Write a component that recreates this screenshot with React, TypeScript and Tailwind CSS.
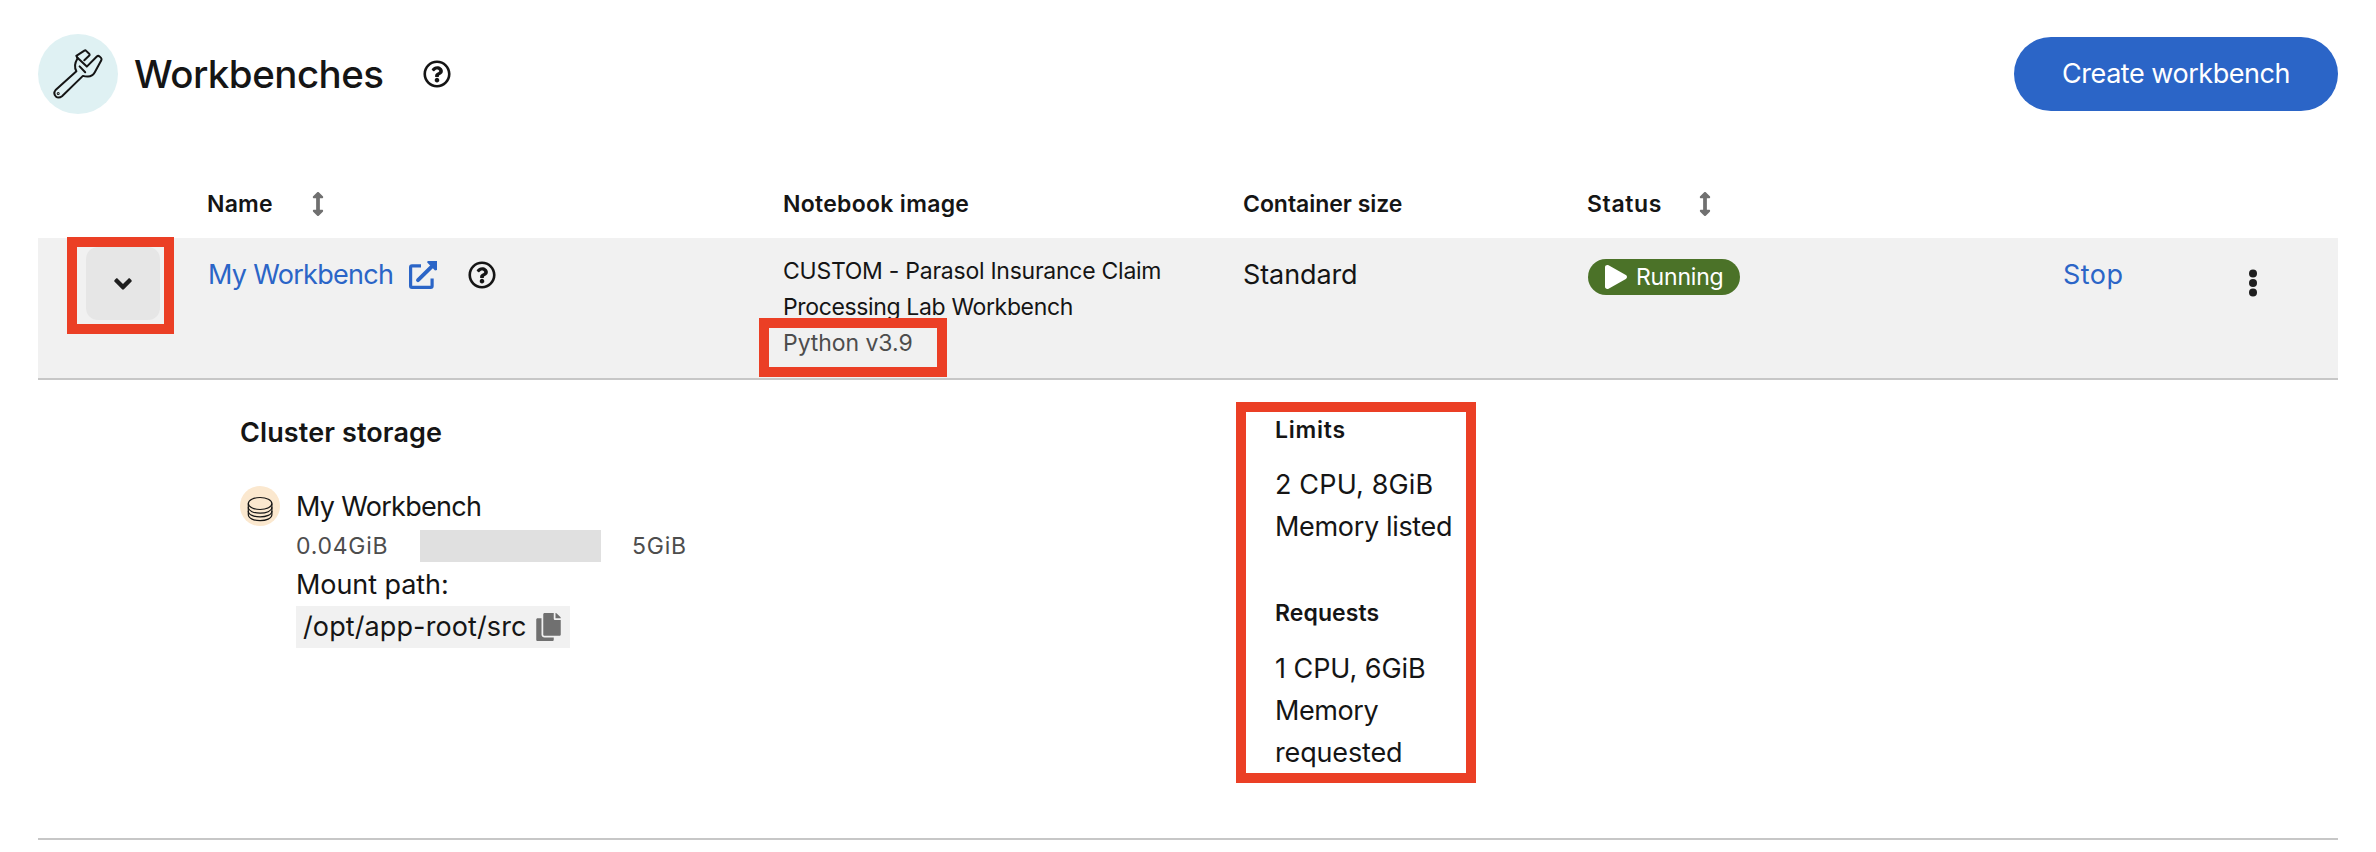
import React from "react";
import { FaAngleDown, FaArrowsAltV, FaCopy, FaPlay, FaRegQuestionCircle } from "react-icons/fa";

const COLUMNS = "grid grid-cols-[170px_575px_460px_345px_475px_1fr]";
const HEADING = "text-[23px] leading-9 font-semibold";
const BODY = "text-[27px] leading-[42px]";
const SMALL = "text-[23px] leading-9";

function WrenchIcon() {
  return (
    <svg viewBox="0 0 80 80" className="size-20" fill="none" stroke="#151515" strokeWidth="2" strokeLinejoin="round" strokeLinecap="round">
      <path d="M39.5 24 L38.3 21.8 L46.4 16.6 Q47.4 16 48.2 16.9 L51.4 20 Q52 20.8 51.3 21.5 L46.3 26.2" />
      <path d="M39.2 23.6 L48.8 32.6 L58.8 22.5 Q60.2 21.3 61.5 22.4 L63 23.9 Q64 25 63.3 26.3 L56.8 38.2 Q54.4 42.4 50 42.6 Q47.4 42.7 44.9 41.9 L24 62.2 Q20.6 64.8 17.8 62.4 Q15 59.4 17.6 56 L38.4 37.2 Q35.2 31.6 39.2 25" />
      <path d="M41.6 32.4 L47.2 38.2" />
      <circle cx="20.2" cy="59.4" r="0.5" />
    </svg>
  );
}

function DatabaseIcon() {
  return (
    <svg viewBox="0 0 40 40" className="size-10" fill="none" stroke="#151515" strokeWidth="1.2">
      <ellipse cx="20.1" cy="17.5" rx="11.8" ry="6" />
      <path d="M8.3 17.5 V28.6 C8.3 36.6 31.9 36.6 31.9 28.6 V17.5" />
      <path d="M8.3 21.2 C8.3 29.2 31.9 29.2 31.9 21.2" />
      <path d="M8.3 24.9 C8.3 32.9 31.9 32.9 31.9 24.9" />
    </svg>
  );
}

function ExternalLinkIcon() {
  return (
    <svg viewBox="0 0 28 28" className="size-7" fill="none" stroke="#2b65c7" strokeWidth="3.2">
      <path d="M12 4.8 H3 Q1.6 4.8 1.6 6.2 V25 Q1.6 26.4 3 26.4 H21.7 Q23.1 26.4 23.1 25 V17.6" />
      <path d="M9 19.2 L24 4.4" strokeWidth="3.9" strokeLinecap="round" />
      <path d="M18.6 0 H28 V9 L26 9.6 L18.2 1.6 Z" fill="#2b65c7" stroke="none" />
    </svg>
  );
}

function KebabIcon() {
  return (
    <svg viewBox="0 0 10 28" className="h-7 w-2.5" fill="#1f1f1f">
      <circle cx="5" cy="4.4" r="4" />
      <circle cx="5" cy="14" r="4" />
      <circle cx="5" cy="23.6" r="4" />
    </svg>
  );
}

function SortIcon() {
  return <FaArrowsAltV className="h-6 w-3 text-[#707070]" preserveAspectRatio="none" />;
}

export default function App() {
  return (
    <div className="h-[852px] w-[2376px] whitespace-nowrap bg-white px-[38px] pt-[34px] font-['Inter',sans-serif] text-[#151515]">
      <header className="flex h-20 items-center">
        <span className="rounded-full bg-[#dff1f3]">
          <WrenchIcon />
        </span>
        <h1 className="ml-4 w-[289px] text-[38.5px] leading-[52px] font-medium tracking-[-0.52px]">Workbenches</h1>
        <FaRegQuestionCircle className="size-7" />
        <button className="ml-auto h-[74px] w-[324px] rounded-full bg-[#2b65c7] text-[27px] leading-[42px] tracking-[-0.47px] text-white">
          Create workbench
        </button>
      </header>

      <div className={`${COLUMNS} ${HEADING} h-[124px] pt-[72px]`}>
        <span />
        <span className="-ml-px flex h-9 items-center justify-between pr-[459px] tracking-[0.21px]">
          Name <SortIcon />
        </span>
        <span className="tracking-[0.29px]">Notebook image</span>
        <span className="tracking-[-0.04px]">Container size</span>
        <span className="-ml-px flex h-9 items-center gap-[37px] tracking-[0.64px]">
          Status <SortIcon />
        </span>
      </div>

      <div className={`${COLUMNS} h-[142px] border-b-2 border-[#c7c7c7] bg-[#f1f1f1]`}>
        <div className="pt-[9px] pl-12">
          <button className="relative flex h-[73px] w-[74px] items-center justify-center rounded-xl bg-[#e6e6e6]">
            <FaAngleDown className="size-7 text-[#1f1f1f]" />
            <span className="absolute -top-[10px] -left-[19px] h-[97px] w-[107px] border-10 border-[#eb3f25]" />
          </button>
        </div>
        <div className="flex h-[58px] items-center pt-4">
          <a className={`${BODY} w-[201px] tracking-[-0.7px] text-[#2b65c7]`}>My Workbench</a>
          <ExternalLinkIcon />
          <FaRegQuestionCircle className="ml-[31px] size-7" />
        </div>
        <div className={`${SMALL} pt-[15px]`}>
          <p className="tracking-[-0.26px]">CUSTOM - Parasol Insurance Claim</p>
          <p className="tracking-[-0.36px]">Processing Lab Workbench</p>
          <p className="relative tracking-[-0.06px] text-[#4d4d4d]">
            Python v3.9
            <span className="absolute -top-[7px] -left-6 h-[59px] w-[188px] border-10 border-[#eb3f25]" />
          </p>
        </div>
        <span className={`${BODY} pt-4 tracking-[-0.1px]`}>Standard</span>
        <div className="pt-[21px]">
          <span className="flex h-9 w-[152px] items-center rounded-full bg-[#4b7228] pl-[17px] text-[23px] tracking-[-0.19px] text-white">
            <FaPlay className="mr-[9px] h-6 w-[22px]" preserveAspectRatio="none" />
            Running
          </span>
        </div>
        <div className="flex pt-4">
          <a className={`${BODY} w-[185px] tracking-[0.47px] text-[#2b65c7]`}>Stop</a>
          <span className="pt-[15px]">
            <KebabIcon />
          </span>
        </div>
      </div>

      <div className="flex h-[460px] border-b-2 border-[#c7c7c7]">
        <section className="w-[1198px] pt-8 pl-[202px]">
          <h2 className="text-[27px] leading-[42px] font-semibold tracking-[0.11px]">Cluster storage</h2>
          <div className="mt-8 flex">
            <span className="size-10 rounded-full bg-[#fbe8cf]">
              <DatabaseIcon />
            </span>
            <div className={`${BODY} ml-4`}>
              <p className="tracking-[-0.7px]">My Workbench</p>
              <div className="mt-0.5 flex h-8 items-center text-[23px] text-[#4d4d4d]">
                <span className="w-[124px] tracking-[0.75px]">0.04GiB</span>
                <span className="h-8 w-[181px] bg-[#e0e0e0]" />
                <span className="ml-[31px] tracking-[0.76px]">5GiB</span>
              </div>
              <p className="mt-0.5 tracking-[-0.08px]">Mount path:</p>
              <p className="flex h-[42px] w-[274px] items-center bg-[#f1f1f1] pl-[7px] tracking-[0.11px]">
                /opt/app-root/src
                <FaCopy className="ml-auto mr-[9px] h-7 w-[25px] text-[#707070]" />
              </p>
            </div>
          </div>
        </section>

        <section className={`${BODY} relative mt-[22px] h-[381px] w-60 border-10 border-[#eb3f25] pl-[29px]`}>
          <h3 className={`${HEADING} tracking-[0.76px]`}>Limits</h3>
          <p className="mt-4 tracking-[0.15px]">2 CPU, 8GiB</p>
          <p className="tracking-[-0.33px]">Memory listed</p>
          <h3 className={`${HEADING} mt-[47px] tracking-[0.08px]`}>Requests</h3>
          <p className="mt-[17px] tracking-[-0.05px]">1 CPU, 6GiB</p>
          <p className="tracking-[-0.41px]">Memory</p>
          <p className="tracking-[-0.15px]">requested</p>
        </section>
      </div>
    </div>
  );
}
